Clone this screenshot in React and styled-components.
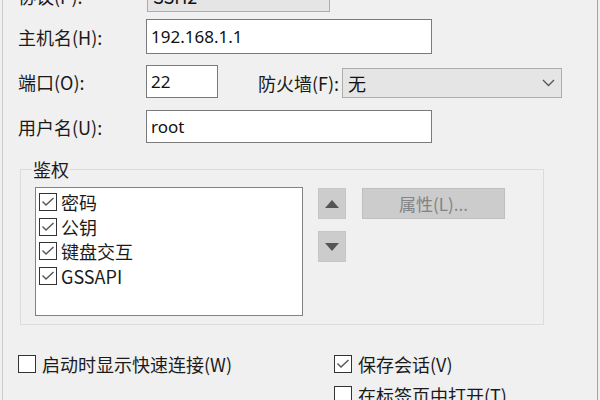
import React from 'react';
import styled, { createGlobalStyle } from 'styled-components';

const Global = createGlobalStyle`
  html, body { margin: 0; padding: 0; background: #f0f0f0; }
  body {
    font-family: "Noto Sans", "Noto Sans CJK SC", sans-serif;
    color: #1b1b1b;
  }
  * { box-sizing: border-box; }
`;

const Page = styled.div`
  width: 600px;
  height: 400px;
  overflow: hidden;
  background: #f0f0f0;
  display: flex;
`;

const Frame = styled.div`
  margin-left: 2px;
  width: 596px;
  height: 100%;
  border-left: 1px solid #cbcbcb;
  border-right: 1px solid #a3a3a3;
  padding-left: 15px;
  display: flex;
  flex-direction: column;
`;

const Row = styled.div`
  display: flex;
  align-items: center;
  height: ${p => (p.$h ? `${p.$h}px` : 'auto')};
  margin-top: ${p => p.$mt || 0}px;
`;

const Label = styled.div`
  width: ${p => p.$w || 128}px;
  margin-left: ${p => p.$ml || 0}px;
  margin-top: ${p => p.$mt || 0}px;
  font-size: 18px;
  line-height: 24px;
  white-space: nowrap;
  font-family: "Noto Sans CJK SC", sans-serif;
`;

const TextInput = styled.div`
  width: ${p => p.$w}px;
  height: ${p => p.$h}px;
  background: #fff;
  border: 1px solid #7a7a7a;
  padding-left: 4px;
  display: flex;
  align-items: center;
  font-size: 17px;
  font-family: "Noto Sans", "Noto Sans CJK SC", sans-serif;
  color: #111;
`;

const Combo = styled.div`
  width: ${p => p.$w}px;
  height: ${p => p.$h}px;
  margin-left: ${p => p.$ml || 0}px;
  align-self: ${p => p.$align || 'center'};
  background: #e5e5e5;
  border: 1px solid #adadad;
  padding: 0 6px 0 5px;
  display: flex;
  align-items: center;
  justify-content: space-between;
  font-size: 18px;
  font-family: "Noto Sans CJK SC", sans-serif;
  color: #111;
`;

const Chevron = () => (
  <svg width="13" height="8" viewBox="0 0 13 8">
    <polyline points="1,1 6.5,6.5 12,1" fill="none" stroke="#555" strokeWidth="1.3" />
  </svg>
);

const Group = styled.fieldset`
  margin: 16px 0 0 2px;
  width: 524px;
  border: 1px solid #dcdcdc;
  padding: 8px 0 8px 14px;
  min-width: 0;
`;

const Legend = styled.legend`
  margin-left: -3px;
  padding: 0 1px;
  font-size: 18px;
  line-height: 20px;
  font-family: "Noto Sans CJK SC", sans-serif;
`;

const GroupBody = styled.div`
  display: flex;
  align-items: flex-start;
`;

const ListBox = styled.div`
  width: 268px;
  height: 129px;
  background: #fff;
  border: 1px solid #828282;
  padding: 5px 3px;
  display: flex;
  flex-direction: column;
  gap: 6.5px;
`;

const Item = styled.div`
  display: flex;
  align-items: center;
  gap: ${p => p.$gap || 4}px;
  height: 18px;
  font-size: 18px;
  line-height: 18px;
  font-family: "Noto Sans CJK SC", sans-serif;
  white-space: nowrap;
`;

const Box = styled.span`
  width: 18px;
  height: 18px;
  flex: none;
  background: #fff;
  border: 1px solid #333;
  display: flex;
  align-items: center;
  justify-content: center;
`;

const Check = ({ on }) => (
  <Box>
    {on && (
      <svg width="14" height="12" viewBox="0 0 14 12">
        <polyline points="1.5,5.5 5,9 12.5,2" fill="none" stroke="#555" strokeWidth="1.4" />
      </svg>
    )}
  </Box>
);

const ArrowCol = styled.div`
  margin-left: 15px;
  margin-top: 1px;
  display: flex;
  flex-direction: column;
  gap: 12px;
`;

const ArrowBtn = styled.div`
  width: 28px;
  height: 31px;
  background: #cccccc;
  border: 1px solid #c6c6c6;
  display: flex;
  align-items: center;
  justify-content: center;
`;

const PropBtn = styled.div`
  margin-left: 16px;
  margin-top: 1px;
  width: 143px;
  height: 31px;
  background: #cccccc;
  border: 1px solid #bfbfbf;
  display: flex;
  align-items: center;
  justify-content: center;
  font-size: 17px;
  color: #838383;
  font-family: "Noto Sans CJK SC", sans-serif;
`;

const Options = styled.div`
  margin-top: 30px;
  display: grid;
  grid-template-columns: 316px 1fr;
  row-gap: 13px;
`;

const Tri = ({ up }) => (
  <svg width="16" height="10" viewBox="0 0 16 10">
    <polygon points={up ? '8,1 15,9 1,9' : '1,1 15,1 8,9'} fill="#555" />
  </svg>
);

export default function App() {
  return (
    <Page>
      <Global />
      <Frame>
        <Row $mt={-21} $h={33}>
          <Label $w={129}>协议(P):</Label>
          <Combo $w={183} $h={33}>
            <span>SSH2</span>
            <Chevron />
          </Combo>
        </Row>
        <Row $mt={7}>
          <Label>主机名(H):</Label>
          <TextInput $w={286} $h={35}>192.168.1.1</TextInput>
        </Row>
        <Row $mt={11} $h={33}>
          <Label>端口(O):</Label>
          <TextInput $w={72} $h={33}>22</TextInput>
          <Label $w={84} $ml={40} $mt={2}>防火墙(F):</Label>
          <Combo $w={220} $h={30} $align="flex-end">
            <span>无</span>
            <Chevron />
          </Combo>
        </Row>
        <Row $mt={12}>
          <Label>用户名(U):</Label>
          <TextInput $w={286} $h={33}>root</TextInput>
        </Row>
        <Group>
          <Legend>鉴权</Legend>
          <GroupBody>
            <ListBox>
              <Item><Check on />密码</Item>
              <Item><Check on />公钥</Item>
              <Item><Check on />键盘交互</Item>
              <Item><Check on />GSSAPI</Item>
            </ListBox>
            <ArrowCol>
              <ArrowBtn><Tri up /></ArrowBtn>
              <ArrowBtn><Tri /></ArrowBtn>
            </ArrowCol>
            <PropBtn>属性(L)...</PropBtn>
          </GroupBody>
        </Group>
        <Options>
          <Item $gap={6}><Check />启动时显示快速连接(W)</Item>
          <Item $gap={6}><Check on />保存会话(V)</Item>
          <span />
          <Item $gap={6}><Check />在标签页中打开(T)</Item>
        </Options>
      </Frame>
    </Page>
  );
}
